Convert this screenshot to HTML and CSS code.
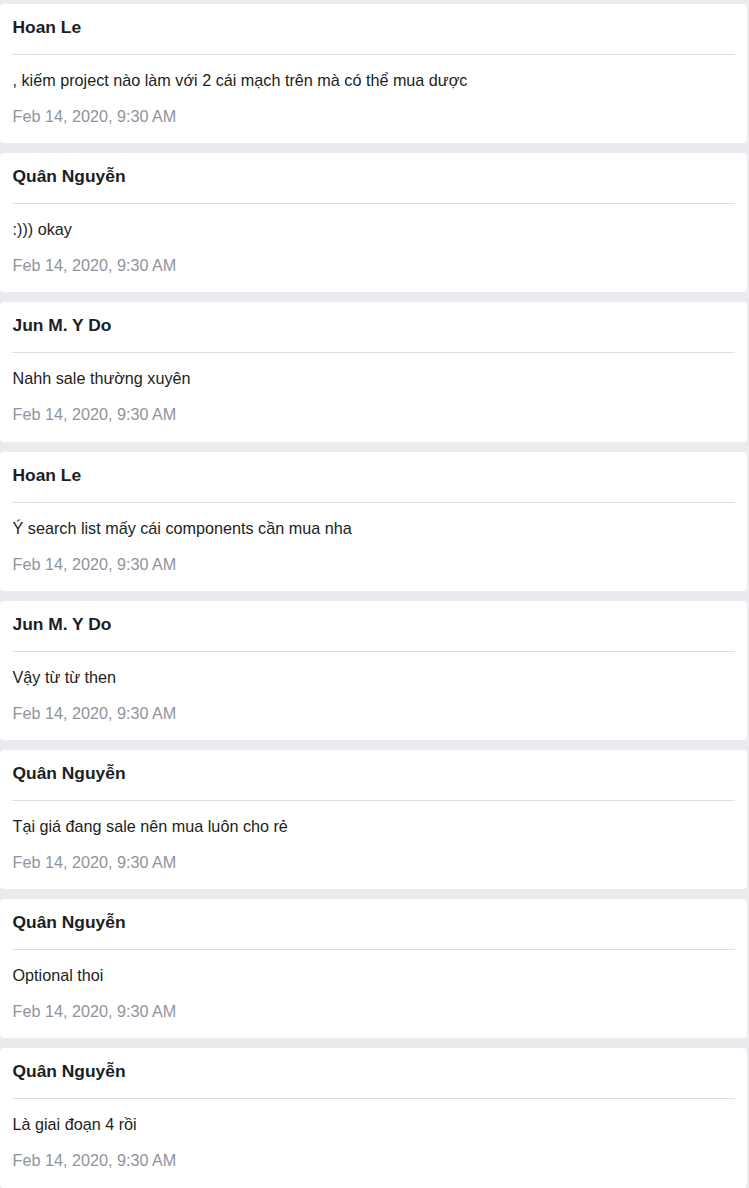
FILE: index.html
```html
<!DOCTYPE html>
<html lang="vi">
<head>
<meta charset="utf-8">
<title>Messages</title>
<link rel="stylesheet" href="styles.css">
</head>
<body>
<div class="list">
  <div class="card">
    <div class="card-head">Hoan Le</div>
    <div class="card-body">
      <div class="msg">, kiếm project nào làm với 2 cái mạch trên mà có thể mua dược</div>
      <div class="date">Feb 14, 2020, 9:30 AM</div>
    </div>
  </div>
  <div class="card">
    <div class="card-head">Quân Nguyễn</div>
    <div class="card-body">
      <div class="msg">:))) okay</div>
      <div class="date">Feb 14, 2020, 9:30 AM</div>
    </div>
  </div>
  <div class="card">
    <div class="card-head">Jun M. Y Do</div>
    <div class="card-body">
      <div class="msg">Nahh sale thường xuyên</div>
      <div class="date">Feb 14, 2020, 9:30 AM</div>
    </div>
  </div>
  <div class="card">
    <div class="card-head">Hoan Le</div>
    <div class="card-body">
      <div class="msg">Ý search list mấy cái components cần mua nha</div>
      <div class="date">Feb 14, 2020, 9:30 AM</div>
    </div>
  </div>
  <div class="card">
    <div class="card-head">Jun M. Y Do</div>
    <div class="card-body">
      <div class="msg">Vậy từ từ then</div>
      <div class="date">Feb 14, 2020, 9:30 AM</div>
    </div>
  </div>
  <div class="card">
    <div class="card-head">Quân Nguyễn</div>
    <div class="card-body">
      <div class="msg">Tại giá đang sale nên mua luôn cho rẻ</div>
      <div class="date">Feb 14, 2020, 9:30 AM</div>
    </div>
  </div>
  <div class="card">
    <div class="card-head">Quân Nguyễn</div>
    <div class="card-body">
      <div class="msg">Optional thoi</div>
      <div class="date">Feb 14, 2020, 9:30 AM</div>
    </div>
  </div>
  <div class="card">
    <div class="card-head">Quân Nguyễn</div>
    <div class="card-body">
      <div class="msg">Là giai đoạn 4 rồi</div>
      <div class="date">Feb 14, 2020, 9:30 AM</div>
    </div>
  </div>
</div>
</body>
</html>
```

FILE: styles.css
```css
html, body {
  margin: 0;
  padding: 0;
  background: #e9ebee;
}

body {
  font-family: "Liberation Sans", Arial, sans-serif;
  color: #1c1e21;
  width: 749px;
  overflow: hidden;
}

.list {
  display: flex;
  flex-direction: column;
  gap: 10px;
  padding: 4px 2px 10px 0;
}

.card {
  background: #ffffff;
  border-radius: 4px;
  padding: 13px 12px 18.2px 12.5px;
}

.card-head {
  font-size: 17.4px;
  font-weight: bold;
  line-height: 20px;
  height: 20px;
  padding-bottom: 17px;
  border-bottom: 1px solid #dddfe2;
  margin-left: -0.5px;
  padding-left: 0.5px;
}

.card-body {
  display: flex;
  flex-direction: column;
  gap: 18px;
  padding-top: 16px;
}

.msg {
  font-size: 16.2px;
  line-height: 18px;
  height: 18px;
  color: #1c1e21;
}

.date {
  font-size: 16.2px;
  line-height: 18px;
  height: 18px;
  color: #90949c;
}
```
